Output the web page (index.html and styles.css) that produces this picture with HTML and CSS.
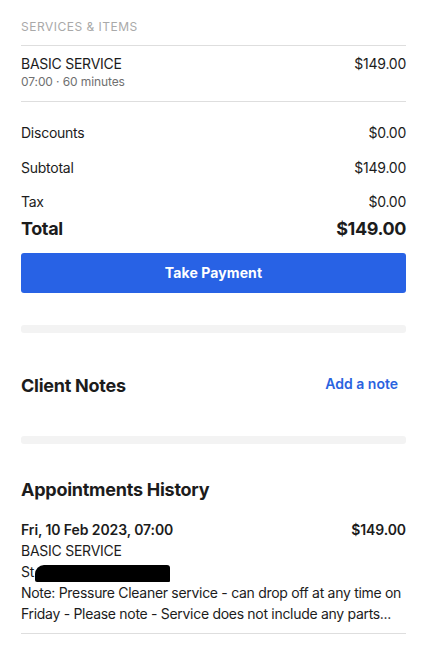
FILE: index.html
```html
<!DOCTYPE html>
<html>
<head>
<meta charset="utf-8">
<link rel="stylesheet" href="styles.css">
</head>
<body>
<div class="page">
  <div class="section-label">SERVICES &amp; ITEMS</div>
  <div class="service">
    <div class="service-main">
      <div class="service-name">BASIC SERVICE</div>
      <div class="service-meta">07:00 · 60 minutes</div>
    </div>
    <div class="service-price">$149.00</div>
  </div>
  <div class="summary">
    <div class="sum-row"><span>Discounts</span><span>$0.00</span></div>
    <div class="sum-row"><span>Subtotal</span><span>$149.00</span></div>
    <div class="sum-row"><span>Tax</span><span>$0.00</span></div>
    <div class="sum-row total"><span>Total</span><span>$149.00</span></div>
  </div>
  <button class="pay-btn">Take Payment</button>
  <div class="sep"></div>
  <div class="notes-head">
    <h2 class="heading">Client Notes</h2>
    <a class="link">Add a note</a>
  </div>
  <div class="sep sep2"></div>
  <h2 class="heading history-title">Appointments History</h2>
  <div class="appt">
    <div class="appt-top"><span>Fri, 10 Feb 2023, 07:00</span><span>$149.00</span></div>
    <div class="appt-line">BASIC SERVICE</div>
    <div class="appt-line">St<span class="redact"></span></div>
    <div class="appt-note">Note: Pressure Cleaner service - can drop off at any time on Friday - Please note - Service does not include any parts...</div>
  </div>
</div>
</body>
</html>
```

FILE: styles.css
```css
* { box-sizing: border-box; }
html, body { margin: 0; padding: 0; background: #fff; }
body {
  font-family: Inter, "Noto Sans", sans-serif;
  color: #1c1c1c;
  font-size: 14px;
  letter-spacing: -0.25px;
}
.page {
  padding: 19px 31px 0 21px;
}
.section-label {
  font-size: 12px;
  line-height: 16px;
  letter-spacing: 0.5px;
  color: #a9a9a9;
  padding-bottom: 10px;
  border-bottom: 1px solid #dedede;
}
.service {
  display: flex;
  justify-content: space-between;
  align-items: flex-start;
  padding: 8px 0 11px;
  border-bottom: 1px solid #dedede;
}
.service-name { font-size: 14px; line-height: 20px; }
.service-meta { font-size: 12px; line-height: 16px; color: #707070; letter-spacing: -0.1px; }
.service-price { font-size: 14px; line-height: 20px; }
.summary {
  display: flex;
  flex-direction: column;
  padding-top: 21px;
  gap: 14.5px;
}
.sum-row {
  display: flex;
  justify-content: space-between;
  line-height: 20px;
}
.sum-row.total {
  margin-top: -10px;
  font-size: 18px;
  font-weight: 700;
  line-height: 24px;
  letter-spacing: -0.4px;
}
.pay-btn {
  display: block;
  width: 100%;
  height: 40px;
  margin-top: 12px;
  padding: 0 0 1px;
  border: 0;
  border-radius: 3px;
  background: #2862e5;
  color: #fff;
  font-family: inherit;
  font-size: 14px;
  font-weight: 700;
  letter-spacing: 0.1px;
}
.sep {
  height: 8px;
  margin-top: 32px;
  background: #f3f3f3;
  border-radius: 3px;
}
.notes-head {
  display: flex;
  justify-content: space-between;
  align-items: center;
  margin-top: 41px;
  padding-right: 8px;
}
.heading {
  margin: 0;
  font-size: 18px;
  font-weight: 700;
  line-height: 24px;
  letter-spacing: -0.25px;
  color: #1c1c1c;
}
.link {
  color: #2a63df;
  font-weight: 600;
  font-size: 14px;
  line-height: 20px;
  letter-spacing: 0;
  margin-top: -4px;
}
.sep2 { margin-top: 38px; }
.history-title { margin-top: 34px; }
.appt {
  margin-top: 17px;
  padding-bottom: 9px;
  border-bottom: 1px solid #dedede;
  line-height: 21px;
}
.appt-top {
  display: flex;
  justify-content: space-between;
  font-weight: 600;
  letter-spacing: -0.1px;
}
.appt-note { letter-spacing: -0.3px; }
.redact {
  display: inline-block;
  vertical-align: -5px;
  width: 135px;
  height: 17px;
  margin-left: 1px;
  background: #000;
  border-radius: 9px 3px 1px 2px;
}
```
